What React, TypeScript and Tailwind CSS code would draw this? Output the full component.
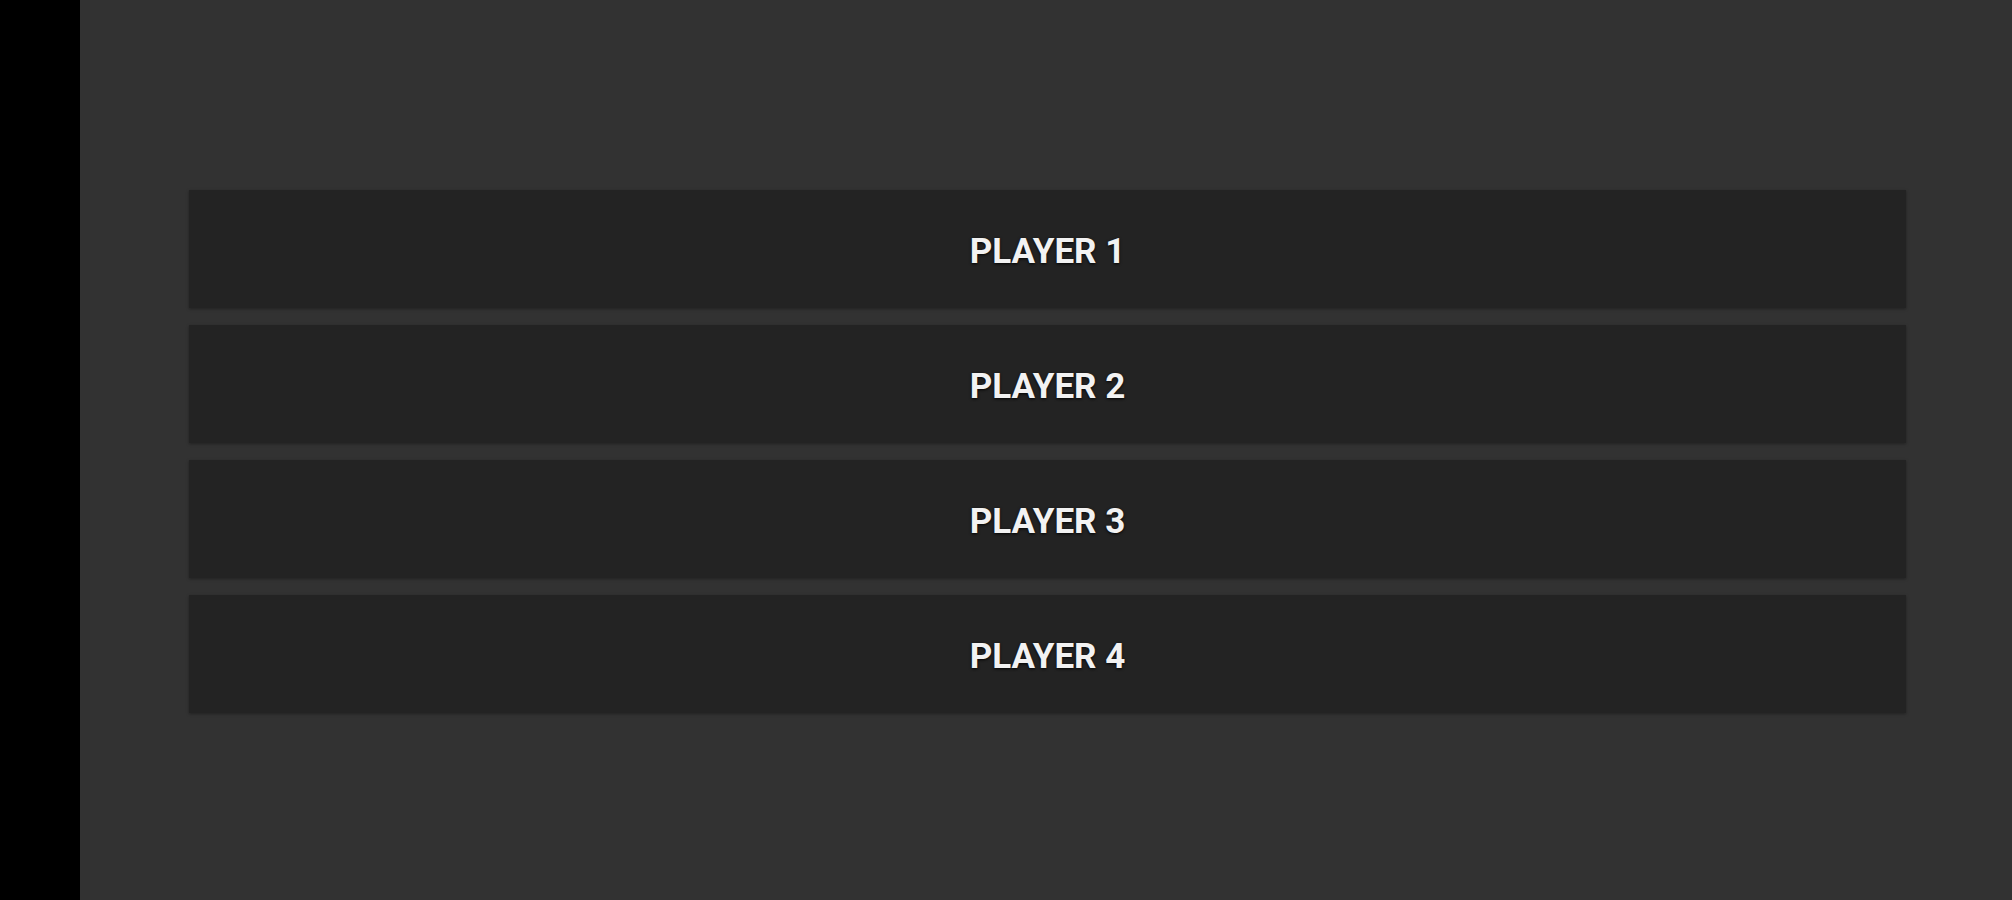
export default function App() {
  const players = ["PLAYER 1", "PLAYER 2", "PLAYER 3", "PLAYER 4"];
  return (
    <div className="flex h-[900px] w-[2012px] bg-black" style={{ fontFamily: "Roboto, 'Noto Sans', sans-serif" }}>
      <div className="w-[80px] shrink-0 bg-black" />
      <div className="flex flex-1 flex-col gap-[17px] bg-[#323232] pl-[109px] pr-[106px] pt-[190px]">
        {players.map((p) => (
          <div
            key={p}
            className="flex h-[118px] items-center justify-center bg-[#232323] pt-[6px] shadow-[0_1px_3px_rgba(0,0,0,0.35)]"
          >
            <span className="text-[35px] font-bold text-[#f2f2f2] [text-shadow:0_1px_3px_rgba(0,0,0,0.9)]">
              {p}
            </span>
          </div>
        ))}
      </div>
    </div>
  );
}
